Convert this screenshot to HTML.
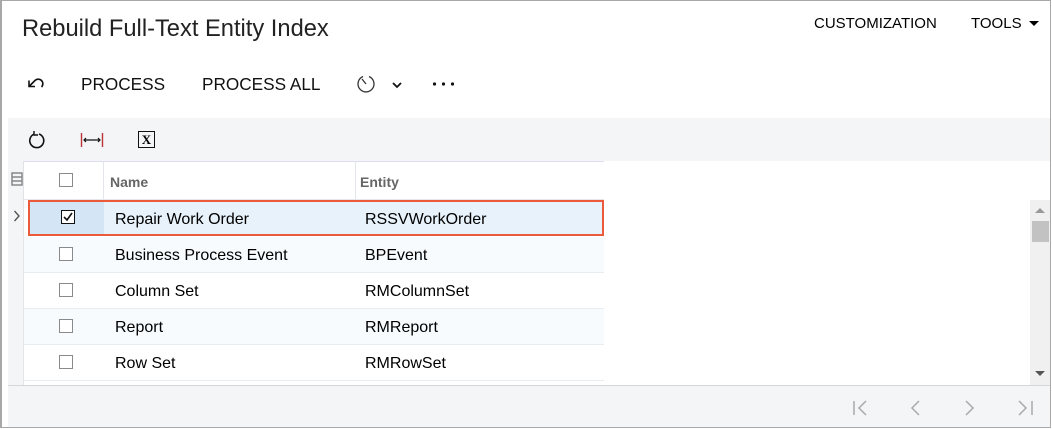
<!DOCTYPE html>
<html><head><style>
*{box-sizing:border-box;margin:0;padding:0}
body{width:1052px;height:429px;background:#fff;font-family:"Liberation Sans",Arial,sans-serif;color:#000;position:relative;overflow:hidden}
.frame{position:absolute;left:0;top:0;width:1051px;height:428px;border:1px solid #a8a8a8;border-left:2px solid #a8a8a8}
.abs{position:absolute}
.title{left:22px;top:16px;font-size:23.7px;color:#222}
.tb{top:74px;font-size:17.2px;color:#111}
.gtool{left:8px;top:118px;width:1042px;height:43px;background:#f4f5f7}
.hdr{left:8px;top:161px;width:596px;height:39px;border-top:1px solid #dde;border-bottom:1px solid #e3e6ea;background:#fff}
.hdr span{position:absolute;top:12px;font-size:14px;font-weight:bold;color:#666}
.row{position:absolute;left:8px;width:596px;height:36px;border-bottom:1px solid #e8edf2;font-size:16px}
.row .n{position:absolute;left:107px;top:10px}
.row .e{position:absolute;left:357px;top:10px}
.cb{position:absolute;left:51px;top:10px;width:14px;height:14px;border:1px solid #8a8a8a;background:#fff}
.gut{position:absolute;left:8px;top:161px;width:16px;height:224px;background:#f4f5f7;border-right:1px solid #dfe3e8}
.foot{left:8px;top:385px;width:1042px;height:42px;background:#f4f5f7;border-top:1px solid #d6d6d6}
.sb{left:1030px;top:200px;width:20px;height:185px;background:#f0f0f0}
</style></head><body>
<div class="abs title">Rebuild Full-Text Entity Index</div>
<div class="abs" style="left:814px;top:15px;font-size:15px">CUSTOMIZATION</div>
<div class="abs" style="left:971px;top:15px;font-size:15px">TOOLS</div>
<div class="abs" style="left:1029px;top:21px;width:0;height:0;border-left:5px solid transparent;border-right:5px solid transparent;border-top:5px solid #000"></div>
<svg class="abs" style="left:25px;top:74px" width="22" height="18" viewBox="0 0 22 18"><path d="M4.5 12 L10 6.5 A4.5 4.5 0 0 1 16.5 13" fill="none" stroke="#111" stroke-width="1.6"/><path d="M4 6.5 L4 12.5 L10 12.5" fill="none" stroke="#111" stroke-width="1.6"/></svg>
<div class="abs tb" style="left:81px">PROCESS</div>
<div class="abs tb" style="left:202px">PROCESS ALL</div>
<svg class="abs" style="left:356px;top:74px" width="20" height="20" viewBox="0 0 20 20"><path d="M7 2.5 A8 8 0 1 0 13 2.5" fill="none" stroke="#333" stroke-width="1.3"/><path d="M10 10 L6 5" stroke="#333" stroke-width="1.3"/></svg>
<svg class="abs" style="left:391px;top:81px" width="12" height="8" viewBox="0 0 12 8"><path d="M2 2 L6 6 L10 2" fill="none" stroke="#111" stroke-width="1.8"/></svg>
<svg class="abs" style="left:432px;top:81px" width="24" height="6"><circle cx="2.5" cy="3" r="1.6" fill="#111"/><circle cx="11.5" cy="3" r="1.6" fill="#111"/><circle cx="20.5" cy="3" r="1.6" fill="#111"/></svg>
<div class="abs gtool"></div>
<svg class="abs" style="left:27px;top:130px" width="20" height="20" viewBox="0 0 20 20"><path d="M12 4 A7 7 0 1 1 7 4.2" fill="none" stroke="#111" stroke-width="1.6"/><path d="M7 1 L7 5 L11 5" fill="none" stroke="#111" stroke-width="1.4"/></svg>
<svg class="abs" style="left:80px;top:131px" width="24" height="18" viewBox="0 0 24 18"><path d="M1.5 2V16M22.5 2V16" stroke="#b33" stroke-width="1.4"/><path d="M4 9H20M6 7L4 9L6 11M18 7L20 9L18 11" fill="none" stroke="#111" stroke-width="1.2"/></svg>
<div class="abs" style="left:138px;top:131px;width:17px;height:17px;border:1.5px solid #111;font:bold 13px 'Liberation Serif',serif;text-align:center;line-height:15px">X</div>
<div class="abs hdr"><span style="left:102px">Name</span><span style="left:352px">Entity</span>
<div style="position:absolute;left:95px;top:0;width:1px;height:38px;background:#e3e6ea"></div>
<div style="position:absolute;left:347px;top:0;width:1px;height:38px;background:#e3e6ea"></div>
<div class="cb" style="top:11px"></div></div>
<div class="gut"></div>
<svg class="abs" style="left:11px;top:172px" width="12" height="14" viewBox="0 0 12 14"><rect x="1" y="1" width="10" height="12" fill="none" stroke="#888" stroke-width="1.5"/><path d="M1 5H11M1 9H11" stroke="#888" stroke-width="1.5"/></svg>
<div class="row" style="top:200px;background:#e8f2fb;border:2px solid #ec5a3c;left:28px;width:576px"><div style="position:absolute;left:0;top:0;width:74px;height:32px;background:#d4e6f6"></div><div class="cb" style="left:31px;top:8px;border-color:#111"><svg width="12" height="12" viewBox="0 0 12 12" style="position:absolute;left:0;top:0"><path d="M2 6L5 9L10 2" fill="none" stroke="#111" stroke-width="1.6"/></svg></div><div class="n" style="left:85px;top:9px">Repair Work Order</div><div class="e" style="left:335px;top:9px">RSSVWorkOrder</div></div>
<svg class="abs" style="left:13px;top:210px" width="8" height="12" viewBox="0 0 8 12"><path d="M1.5 1L6 6L1.5 11" fill="none" stroke="#555" stroke-width="1.4"/></svg>
<div class="row" style="top:237px;background:#f7fbfe"><div class="cb"></div><div class="n">Business Process Event</div><div class="e">BPEvent</div></div>
<div class="row" style="top:273px"><div class="cb"></div><div class="n">Column Set</div><div class="e">RMColumnSet</div></div>
<div class="row" style="top:309px;background:#f7fbfe"><div class="cb"></div><div class="n">Report</div><div class="e">RMReport</div></div>
<div class="row" style="top:345px"><div class="cb"></div><div class="n">Row Set</div><div class="e">RMRowSet</div></div>
<div class="abs gut" style="top:237px;height:148px;border-right:1px solid #e3e6ea"></div>
<div class="abs sb"></div>
<div class="abs" style="left:1035px;top:208px;border-left:5px solid transparent;border-right:5px solid transparent;border-bottom:5px solid #999"></div>
<div class="abs" style="left:1032px;top:221px;width:17px;height:21px;background:#c2c2c2"></div>
<div class="abs" style="left:1035px;top:371px;border-left:5px solid transparent;border-right:5px solid transparent;border-top:5px solid #555"></div>
<div class="abs foot"></div>
<svg class="abs" style="left:850px;top:399px" width="190" height="18" viewBox="0 0 190 18"><g fill="none" stroke="#aaa" stroke-width="1.5"><path d="M4 2V16M16 2L9 9L16 16"/><path d="M69 2L62 9L69 16"/><path d="M116 2L123 9L116 16"/><path d="M169 2L176 9L169 16M182 2V16"/></g></svg>
<div class="frame"></div>
</body></html>
